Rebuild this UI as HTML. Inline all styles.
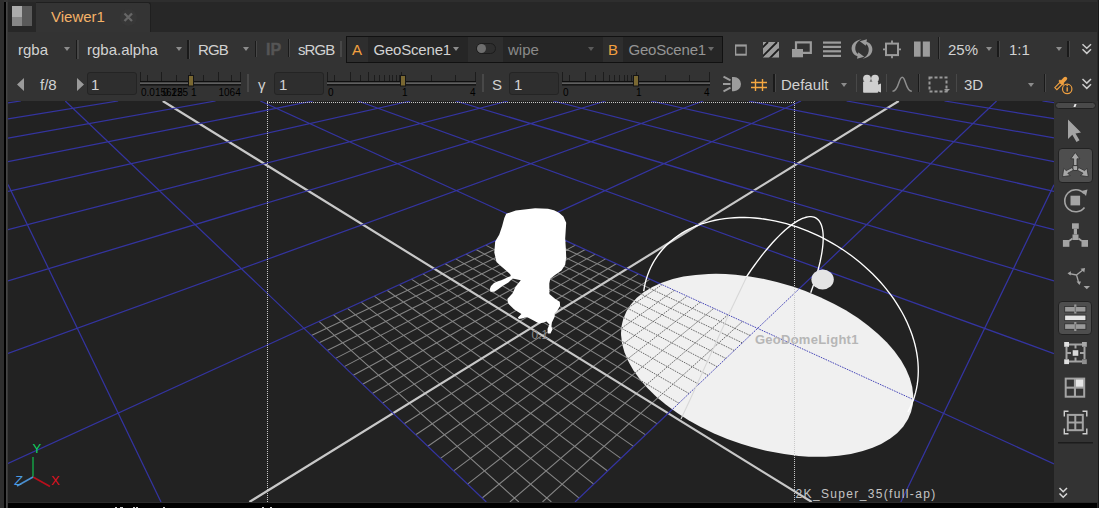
<!DOCTYPE html><html><head><meta charset="utf-8"><style>
html,body{margin:0;padding:0;width:1099px;height:508px;overflow:hidden;background:#333;position:relative}
.t{position:absolute;white-space:pre;line-height:1;font-family:"Liberation Sans",sans-serif}
</style></head><body>
<div style="position:absolute;left:0px;top:0px;width:4px;height:508px;background:#2e2e2e;"></div><div style="position:absolute;left:4px;top:2px;width:2px;height:506px;background:#000;"></div><div style="position:absolute;left:6px;top:2px;width:1px;height:506px;background:#474747;"></div><div style="position:absolute;left:7px;top:2px;width:1px;height:506px;background:#3a3a3a;"></div><div style="position:absolute;left:8px;top:0px;width:1091px;height:2px;background:#2e2e2e;"></div><div style="position:absolute;left:8px;top:2px;width:1091px;height:30px;background:#272727;"></div><div style="position:absolute;left:12px;top:6px;width:20px;height:20px;background:#444;"></div><div style="position:absolute;left:12px;top:6px;width:10px;height:11px;background:#acacac;"></div><div style="position:absolute;left:12px;top:17px;width:10px;height:9px;background:#878787;"></div><div style="position:absolute;left:22px;top:6px;width:10px;height:20px;background:#5a5a5a;"></div><div style="position:absolute;left:36px;top:2px;width:115px;height:30px;background:#343434;border-top:1px solid #1f1f1f;border-right:1px solid #1f1f1f;border-radius:0 3px 0 0;box-sizing:border-box"></div><div class="t" style="left:51px;top:9.30px;font-size:15px;color:#f4b268;">Viewer1</div><div style="position:absolute;left:120px;top:9px;width:17px;height:17px;border-radius:9px;background:#373737"></div><svg style="position:absolute;left:0;top:0" width="1099" height="40"><path d="M124.5 13.5L132 21M132 13.5L124.5 21" stroke="#666666" stroke-width="2.3"/></svg><div style="position:absolute;left:8px;top:32px;width:1089px;height:70px;background:#333333;"></div><div style="position:absolute;left:1097px;top:0px;width:1px;height:508px;background:#2a2a2a;"></div><div style="position:absolute;left:1098px;top:0px;width:1px;height:508px;background:#181818;"></div><div class="t" style="left:18px;top:42.30px;font-size:15px;color:#d2d2d2;">rgba</div><div style="position:absolute;left:64px;top:47px;width:0;height:0;border-left:3.5px solid transparent;border-right:3.5px solid transparent;border-top:4px solid #8c8c8c"></div><div style="position:absolute;left:187.2px;top:40px;width:1.5px;height:18.700000000000003px;background:#1a1a1a"></div><div style="position:absolute;left:188.7px;top:40px;width:1px;height:18.700000000000003px;background:#474747"></div><div style="position:absolute;left:76px;top:40px;width:1px;height:19px;background:#1a1a1a"></div><div style="position:absolute;left:77px;top:40px;width:2px;height:19px;background:#474747"></div><div class="t" style="left:87px;top:42.30px;font-size:15px;color:#d2d2d2;">rgba.alpha</div><div style="position:absolute;left:176px;top:47px;width:0;height:0;border-left:3.5px solid transparent;border-right:3.5px solid transparent;border-top:4px solid #8c8c8c"></div><div style="position:absolute;left:255px;top:41px;width:1px;height:16px;background:#1a1a1a"></div><div style="position:absolute;left:256px;top:41px;width:1px;height:16px;background:#474747"></div><div class="t" style="left:198px;top:42.30px;font-size:15px;color:#d2d2d2;letter-spacing:-0.9px">RGB</div><div style="position:absolute;left:243px;top:47px;width:0;height:0;border-left:3.5px solid transparent;border-right:3.5px solid transparent;border-top:4px solid #8c8c8c"></div><div style="position:absolute;left:288px;top:39px;width:1px;height:18px;background:#1a1a1a"></div><div style="position:absolute;left:289px;top:39px;width:1px;height:18px;background:#474747"></div><div class="t" style="left:266px;top:41.96px;font-size:16px;color:#555555;font-weight:bold;-webkit-text-stroke:0.4px #555">IP</div><div class="t" style="left:298px;top:42.30px;font-size:15px;color:#d2d2d2;letter-spacing:-0.9px">sRGB</div><div style="position:absolute;left:340.2px;top:41px;width:2px;height:16px;background:#484848"></div><div style="position:absolute;left:346px;top:36px;width:377px;height:27px;background:#111;"></div><div style="position:absolute;left:347px;top:37px;width:21px;height:25px;background:#2e2e2e;"></div><div style="position:absolute;left:368px;top:37px;width:100px;height:25px;background:#262626;"></div><div style="position:absolute;left:468px;top:37px;width:35px;height:25px;background:#2e2e2e;"></div><div style="position:absolute;left:503px;top:37px;width:100px;height:25px;background:#262626;"></div><div style="position:absolute;left:603px;top:37px;width:20px;height:25px;background:#2e2e2e;"></div><div style="position:absolute;left:623px;top:37px;width:99px;height:25px;background:#262626;"></div><div class="t" style="left:352px;top:42.30px;font-size:15px;color:#f2a040;">A</div><div class="t" style="left:373.5px;top:42.30px;font-size:15px;color:#d2d2d2;letter-spacing:-0.2px">GeoScene1</div><div style="position:absolute;left:453px;top:47px;width:0;height:0;border-left:3.5px solid transparent;border-right:3.5px solid transparent;border-top:4px solid #8c8c8c"></div><div style="position:absolute;left:476px;top:43px;width:20px;height:10.6px;border-radius:6px;background:#2e2e2e;border:1px solid #1c1c1c;box-sizing:border-box"></div><div style="position:absolute;left:477px;top:43.8px;width:9px;height:9px;border-radius:5px;background:#6e6e6e"></div><div class="t" style="left:508px;top:42.30px;font-size:15px;color:#8a8a8a;">wipe</div><div style="position:absolute;left:588px;top:47px;width:0;height:0;border-left:3.5px solid transparent;border-right:3.5px solid transparent;border-top:4px solid #5a5a5a"></div><div class="t" style="left:608px;top:42.30px;font-size:15px;color:#f2a040;">B</div><div class="t" style="left:628.5px;top:42.30px;font-size:15px;color:#959595;letter-spacing:-0.2px">GeoScene1</div><div style="position:absolute;left:708px;top:47px;width:0;height:0;border-left:3.5px solid transparent;border-right:3.5px solid transparent;border-top:4px solid #6a6a6a"></div><svg style="position:absolute;left:0;top:32px" width="1099" height="36" viewBox="0 32 1099 36">
<rect x="735" y="44.4" width="11.8" height="11.3" fill="#9c9c9c"/><rect x="736.3" y="46.6" width="9.2" height="7.1" fill="#333"/>
<clipPath id="hc"><rect x="763" y="42" width="16" height="15.7"/></clipPath><g clip-path="url(#hc)"><rect x="763" y="42" width="16" height="15.7" fill="#9c9c9c"/><path d="M760 50L768 42M760 59L777 42M769 59L779 49" stroke="#1e1e1e" stroke-width="1.9"/></g>
<rect x="792" y="49" width="11" height="8.3" fill="#9c9c9c"/><path d="M796 49V42.3H810.8V52.8H803" fill="none" stroke="#9c9c9c" stroke-width="2.2"/>
<g fill="#9c9c9c"><rect x="823" y="41.5" width="18" height="2.2"/><rect x="823" y="45.8" width="18" height="2.2"/><rect x="823" y="50.2" width="18" height="2.2"/><rect x="823" y="54.8" width="18" height="2.2"/></g>
<g fill="#9c9c9c"><path id="rf" d="M861.5 39.3C853.5 40.5 850.5 46 852 51C853 54 855 55.5 857.5 56.3L857 58.8L864.2 56.7L858.2 52.3L858 54C855.8 52.5 855 50 855.3 47C855.7 43.5 858 41 861.5 39.3Z"/><path transform="rotate(180 862 49)" d="M861.5 39.3C853.5 40.5 850.5 46 852 51C853 54 855 55.5 857.5 56.3L857 58.8L864.2 56.7L858.2 52.3L858 54C855.8 52.5 855 50 855.3 47C855.7 43.5 858 41 861.5 39.3Z"/></g>
<rect x="886" y="43.6" width="12" height="11.5" fill="none" stroke="#9c9c9c" stroke-width="2"/>
<path d="M892 40.5V43.6M892 55V58.3M883 49.4H886M898 49.4H901" stroke="#9c9c9c" stroke-width="1.8"/>
<rect x="914" y="41.5" width="6.6" height="15.2" fill="#9c9c9c"/><rect x="922.8" y="41.5" width="7.1" height="15.2" fill="#9c9c9c"/>
</svg><div style="position:absolute;left:938px;top:37px;width:1px;height:22px;background:#1a1a1a"></div><div style="position:absolute;left:939px;top:37px;width:1px;height:22px;background:#474747"></div><div class="t" style="left:948px;top:42.30px;font-size:15px;color:#d2d2d2;">25%</div><div style="position:absolute;left:986px;top:47px;width:0;height:0;border-left:3.5px solid transparent;border-right:3.5px solid transparent;border-top:4px solid #8c8c8c"></div><div style="position:absolute;left:997.2px;top:41px;width:1.5px;height:16px;background:#1a1a1a"></div><div style="position:absolute;left:998.7px;top:41px;width:1px;height:16px;background:#474747"></div><div class="t" style="left:1009px;top:42.30px;font-size:15px;color:#d2d2d2;">1:1</div><div style="position:absolute;left:1056px;top:47px;width:0;height:0;border-left:3.5px solid transparent;border-right:3.5px solid transparent;border-top:4px solid #8c8c8c"></div><div style="position:absolute;left:1067.1px;top:41px;width:1.5px;height:16px;background:#1a1a1a"></div><div style="position:absolute;left:1068.6px;top:41px;width:1px;height:16px;background:#474747"></div><svg style="position:absolute;left:0;top:0" width="1099" height="60"><path d="M1082.5 44.2L1086.8 48.3L1091 44.2M1082.5 49.3L1086.8 53.4L1091 49.3" fill="none" stroke="#cccccc" stroke-width="1.5"/></svg><svg style="position:absolute;left:0;top:66px" width="1099" height="36"><path d="M24 12L17 18.5L24 25Z M77 12L84 18.5L77 25Z" fill="#9a9a9a"/></svg><div class="t" style="left:40px;top:77.30px;font-size:15px;color:#d2d2d2;">f/8</div><div style="position:absolute;left:87px;top:72px;width:50px;height:23px;background:#2e2e2e;border:1px solid #242424;border-radius:3px;box-sizing:border-box"></div><div class="t" style="left:91px;top:77.30px;font-size:15px;color:#d2d2d2;">1</div><svg style="position:absolute;left:0;top:66px" width="1099" height="36" viewBox="0 66 1099 36"><rect x="140" y="81" width="101" height="4.5" fill="#0e0e0e"/><rect x="140" y="82.3" width="101" height="1.8" fill="#606060"/><rect x="140" y="72" width="1" height="9" fill="#1c1c1c"/><rect x="147" y="75" width="1" height="6" fill="#1c1c1c"/><rect x="161" y="72" width="1" height="9" fill="#1c1c1c"/><rect x="176" y="75" width="1" height="6" fill="#1c1c1c"/><rect x="190" y="72" width="1" height="9" fill="#1c1c1c"/><rect x="203" y="75" width="1" height="6" fill="#1c1c1c"/><rect x="218" y="72" width="1" height="9" fill="#1c1c1c"/><rect x="231" y="75" width="1" height="6" fill="#1c1c1c"/><rect x="240" y="72" width="1" height="9" fill="#1c1c1c"/><rect x="188" y="75" width="6" height="11.5" fill="#151515"/><rect x="189" y="76" width="4" height="9.5" fill="#7a6832"/></svg><div class="t" style="left:141px;top:87.73px;font-size:10px;color:#000;">0.015625</div><div class="t" style="left:163px;top:87.73px;font-size:10px;color:#000;">0.125</div><div class="t" style="left:191px;top:87.73px;font-size:10px;color:#000;">1</div><div class="t" style="left:218.5px;top:87.73px;font-size:10px;color:#000;">1064</div><div style="position:absolute;left:247px;top:74px;width:2px;height:18px;background:#484848"></div><div class="t" style="left:258px;top:77.30px;font-size:15px;color:#d2d2d2;">γ</div><div style="position:absolute;left:274px;top:72px;width:50px;height:23px;background:#2e2e2e;border:1px solid #242424;border-radius:3px;box-sizing:border-box"></div><div class="t" style="left:279px;top:77.30px;font-size:15px;color:#d2d2d2;">1</div><svg style="position:absolute;left:0;top:66px" width="1099" height="36" viewBox="0 66 1099 36"><rect x="327" y="81" width="149" height="4.5" fill="#0e0e0e"/><rect x="327" y="82.3" width="149" height="1.8" fill="#606060"/><rect x="327" y="72" width="1" height="9" fill="#1c1c1c"/><rect x="334" y="75" width="1" height="6" fill="#1c1c1c"/><rect x="350" y="72" width="1" height="9" fill="#1c1c1c"/><rect x="360" y="75" width="1" height="6" fill="#1c1c1c"/><rect x="368" y="72" width="1" height="9" fill="#1c1c1c"/><rect x="374" y="75" width="1" height="6" fill="#1c1c1c"/><rect x="379" y="75" width="1" height="6" fill="#1c1c1c"/><rect x="384" y="75" width="1" height="6" fill="#1c1c1c"/><rect x="389" y="75" width="1" height="6" fill="#1c1c1c"/><rect x="392" y="75" width="1" height="6" fill="#1c1c1c"/><rect x="396" y="75" width="1" height="6" fill="#1c1c1c"/><rect x="399" y="75" width="1" height="6" fill="#1c1c1c"/><rect x="401" y="72" width="1" height="9" fill="#1c1c1c"/><rect x="431" y="75" width="1" height="6" fill="#1c1c1c"/><rect x="455" y="75" width="1" height="6" fill="#1c1c1c"/><rect x="475" y="72" width="1" height="9" fill="#1c1c1c"/><rect x="400" y="75" width="6" height="11.5" fill="#151515"/><rect x="401" y="76" width="4" height="9.5" fill="#7a6832"/></svg><div class="t" style="left:328px;top:87.73px;font-size:10px;color:#000;">0</div><div class="t" style="left:402px;top:87.73px;font-size:10px;color:#000;">1</div><div class="t" style="left:470px;top:87.73px;font-size:10px;color:#000;">4</div><div style="position:absolute;left:482px;top:74px;width:2px;height:18px;background:#484848"></div><div class="t" style="left:492px;top:77.30px;font-size:15px;color:#d2d2d2;">S</div><div style="position:absolute;left:509px;top:72px;width:50px;height:23px;background:#2e2e2e;border:1px solid #242424;border-radius:3px;box-sizing:border-box"></div><div class="t" style="left:514px;top:77.30px;font-size:15px;color:#d2d2d2;">1</div><svg style="position:absolute;left:0;top:66px" width="1099" height="36" viewBox="0 66 1099 36"><rect x="562" y="81" width="148" height="4.5" fill="#0e0e0e"/><rect x="562" y="82.3" width="148" height="1.8" fill="#606060"/><rect x="562" y="72" width="1" height="9" fill="#1c1c1c"/><rect x="569" y="75" width="1" height="6" fill="#1c1c1c"/><rect x="585" y="72" width="1" height="9" fill="#1c1c1c"/><rect x="595" y="75" width="1" height="6" fill="#1c1c1c"/><rect x="603" y="72" width="1" height="9" fill="#1c1c1c"/><rect x="609" y="75" width="1" height="6" fill="#1c1c1c"/><rect x="614" y="75" width="1" height="6" fill="#1c1c1c"/><rect x="619" y="75" width="1" height="6" fill="#1c1c1c"/><rect x="624" y="75" width="1" height="6" fill="#1c1c1c"/><rect x="627" y="75" width="1" height="6" fill="#1c1c1c"/><rect x="631" y="75" width="1" height="6" fill="#1c1c1c"/><rect x="634" y="75" width="1" height="6" fill="#1c1c1c"/><rect x="636" y="72" width="1" height="9" fill="#1c1c1c"/><rect x="665" y="75" width="1" height="6" fill="#1c1c1c"/><rect x="689" y="75" width="1" height="6" fill="#1c1c1c"/><rect x="709" y="72" width="1" height="9" fill="#1c1c1c"/><rect x="633" y="75" width="6" height="11.5" fill="#151515"/><rect x="634" y="76" width="4" height="9.5" fill="#7a6832"/></svg><div class="t" style="left:563px;top:87.73px;font-size:10px;color:#000;">0</div><div class="t" style="left:636px;top:87.73px;font-size:10px;color:#000;">1</div><div class="t" style="left:704px;top:87.73px;font-size:10px;color:#000;">4</div><svg style="position:absolute;left:0;top:66px" width="1099" height="36" viewBox="0 66 1099 36">
<path d="M732 77H734A7 7.1 0 0 1 734 91.2H732Z" fill="#9c9c9c"/>
<path d="M723.5 76.7L730.5 80.3M723 84H730.5M723.5 91.3L730.5 87.7" stroke="#9c9c9c" stroke-width="2"/>
<path d="M755.5 79V91M762.5 79V91M751 82.5H767M751 87.5H767" stroke="#f5a842" stroke-width="1.4"/>
</svg><div style="position:absolute;left:773px;top:74px;width:1.5px;height:18px;background:#1a1a1a"></div><div style="position:absolute;left:774.5px;top:74px;width:1px;height:18px;background:#474747"></div><div class="t" style="left:781px;top:77.30px;font-size:15px;color:#d2d2d2;">Default</div><div style="position:absolute;left:841px;top:83px;width:0;height:0;border-left:3.5px solid transparent;border-right:3.5px solid transparent;border-top:4px solid #8c8c8c"></div><div style="position:absolute;left:856px;top:74px;width:1px;height:18px;background:#484848"></div><svg style="position:absolute;left:0;top:66px" width="1099" height="36" viewBox="0 66 1099 36">
<circle cx="867" cy="78.6" r="3.9" fill="#cfcfcf"/><circle cx="875" cy="78.6" r="3.9" fill="#cfcfcf"/>
<rect x="863.1" y="81.5" width="15" height="11.2" rx="0.8" fill="#cfcfcf"/><path d="M877 85L881 83.5V92.5L877 91Z" fill="#cfcfcf"/>
<path d="M892.5 91.3C899 91.3 898.5 77.3 902.2 77.3C906 77.3 905.5 91.3 911.8 91.3" fill="none" stroke="#8e8e8e" stroke-width="1.5"/>
<rect x="929.5" y="77.5" width="17" height="14" fill="none" stroke="#9a9a9a" stroke-width="2" stroke-dasharray="3 2"/>
<path d="M944 89H950L947 92Z" fill="#9a9a9a"/>
</svg><div style="position:absolute;left:886px;top:74px;width:1px;height:18px;background:#484848"></div><div style="position:absolute;left:917.8px;top:74px;width:1.5px;height:18px;background:#1a1a1a"></div><div style="position:absolute;left:919.3px;top:74px;width:1px;height:18px;background:#474747"></div><div style="position:absolute;left:956px;top:74px;width:1px;height:18px;background:#484848"></div><div class="t" style="left:964px;top:77.30px;font-size:15px;color:#d2d2d2;">3D</div><div style="position:absolute;left:1028px;top:83px;width:0;height:0;border-left:3.5px solid transparent;border-right:3.5px solid transparent;border-top:4px solid #8c8c8c"></div><div style="position:absolute;left:1043.6px;top:74px;width:1.5px;height:18px;background:#1a1a1a"></div><div style="position:absolute;left:1045.1px;top:74px;width:1px;height:18px;background:#474747"></div><svg style="position:absolute;left:0;top:66px" width="1099" height="36" viewBox="0 66 1099 36">
<path d="M1054.8 87.6L1060.3 82.1L1062.4 84.2L1056.9 89.7Z" fill="none" stroke="#f0a040" stroke-width="1.1"/>
<path d="M1059.2 80.3L1063.6 84.7" stroke="#f0a040" stroke-width="2.2"/><path d="M1061.7 82.3L1065.3 78.7" stroke="#f0a040" stroke-width="3.8" stroke-linecap="round"/>
<circle cx="1067.2" cy="88.9" r="4.7" fill="#333" stroke="#f0a040" stroke-width="1.2"/><path d="M1067.2 87.2V91.6" stroke="#f0a040" stroke-width="1.4"/><rect x="1066.5" y="85" width="1.4" height="1.2" fill="#f0a040"/>
<path d="M1082.5 79L1086.8 83.1L1091 79M1082.5 84.3L1086.8 88.4L1091 84.3" fill="none" stroke="#cccccc" stroke-width="1.5"/>
</svg><div style="position:absolute;left:8px;top:101px;width:1046px;height:401px;background:#222222;"></div><svg style="position:absolute;left:0;top:0" width="1099" height="508" viewBox="0 0 1099 508">
<defs><clipPath id="vc"><rect x="8" y="101" width="1046" height="401"/></clipPath></defs>
<g clip-path="url(#vc)">
<clipPath id="ec"><ellipse cx="767.17" cy="365.27" rx="151.25" ry="82.79" transform="rotate(17.96 767.17 365.27)"/></clipPath>
<path d="M542.45 502L742.5 321.46M518.85 502L318.94 321.39M509.88 502L727.94 314.8M551.39 502L333.48 314.74M482.15 498.03L713.87 308.37M579.15 498.08L347.54 308.31M467.57 484.15L700.26 302.15M593.74 484.2L361.13 302.1M453.68 470.92L687.09 296.13M607.63 470.98L374.29 296.09M440.43 458.31L674.34 290.3M620.88 458.37L387.03 290.26M427.8 446.27L661.99 284.65M633.53 446.34L399.37 284.62M415.72 434.77L650.02 279.18M645.61 434.85L411.33 279.15M404.17 423.77L638.41 273.87M657.18 423.85L422.93 273.85M382.51 403.14L616.22 263.73M678.85 403.23L445.11 263.71M372.35 393.46L605.61 258.87M689.02 393.55L455.72 258.86M362.59 384.17L595.31 254.16M698.79 384.26L466.02 254.15M353.22 375.24L585.29 249.58M708.18 375.33L476.03 249.57M344.21 366.66L575.55 245.13M717.2 366.75L485.77 245.12M335.53 358.4L566.08 240.8M725.88 358.49L495.24 240.79M327.18 350.45L556.86 236.58M734.24 350.54L504.45 236.58M319.14 342.79L547.9 232.48M742.3 342.87L513.42 232.48M311.38 335.4L539.16 228.49M750.07 335.48L522.15 228.49" stroke="#848484" stroke-width="1.05" fill="none"/>
<path d="M249.35 502L898.78 101M811.77 502L162.76 101" stroke="#c8c8c8" stroke-width="2.2" fill="none"/>
<path d="M900.84 502L1054 184.69M161.01 502L8 184.44M575.02 502L996.57 101M486.31 502L65.26 101M8 463.53L801.04 101M1054 463.88L260.32 101M8 353.37L703.35 101M1054 353.56L357.92 101M8 280.88L605.7 101M1054 280.96L455.56 101M8 229.56L508.1 101M1054 229.57L553.25 101M8 191.32L410.55 101M1054 191.27L650.99 101M8 161.72L313.04 101M1054 161.63L748.77 101M8 138.13L215.57 101M1054 138L846.6 101M8 118.89L118.15 101M1054 118.74L944.47 101M8 102.9L20.78 101M1054 102.72L1042.39 101" stroke="#3434a0" stroke-width="1.25" fill="none"/>
<ellipse cx="767.17" cy="365.27" rx="151.25" ry="82.79" transform="rotate(17.96 767.17 365.27)" fill="#f0f0f0"/>
<g clip-path="url(#ec)"><path d="M542.45 502L742.5 321.46M518.85 502L318.94 321.39M509.88 502L727.94 314.8M551.39 502L333.48 314.74M482.15 498.03L713.87 308.37M579.15 498.08L347.54 308.31M467.57 484.15L700.26 302.15M593.74 484.2L361.13 302.1M453.68 470.92L687.09 296.13M607.63 470.98L374.29 296.09M440.43 458.31L674.34 290.3M620.88 458.37L387.03 290.26M427.8 446.27L661.99 284.65M633.53 446.34L399.37 284.62M415.72 434.77L650.02 279.18M645.61 434.85L411.33 279.15M404.17 423.77L638.41 273.87M657.18 423.85L422.93 273.85M382.51 403.14L616.22 263.73M678.85 403.23L445.11 263.71M372.35 393.46L605.61 258.87M689.02 393.55L455.72 258.86M362.59 384.17L595.31 254.16M698.79 384.26L466.02 254.15M353.22 375.24L585.29 249.58M708.18 375.33L476.03 249.57M344.21 366.66L575.55 245.13M717.2 366.75L485.77 245.12M335.53 358.4L566.08 240.8M725.88 358.49L495.24 240.79M327.18 350.45L556.86 236.58M734.24 350.54L504.45 236.58M319.14 342.79L547.9 232.48M742.3 342.87L513.42 232.48M311.38 335.4L539.16 228.49M750.07 335.48L522.15 228.49" stroke="#6a6a6a" stroke-width="1" stroke-dasharray="1.6 1" fill="none"/>
<path d="M900.84 502L1054 184.69M161.01 502L8 184.44M575.02 502L996.57 101M486.31 502L65.26 101M8 463.53L801.04 101M1054 463.88L260.32 101M8 353.37L703.35 101M1054 353.56L357.92 101M8 280.88L605.7 101M1054 280.96L455.56 101M8 229.56L508.1 101M1054 229.57L553.25 101M8 191.32L410.55 101M1054 191.27L650.99 101M8 161.72L313.04 101M1054 161.63L748.77 101M8 138.13L215.57 101M1054 138L846.6 101M8 118.89L118.15 101M1054 118.74L944.47 101M8 102.9L20.78 101M1054 102.72L1042.39 101" stroke="#4848b8" stroke-width="1" stroke-dasharray="1.6 1" fill="none"/></g>
<path d="M506.2 213.8L515.8 210.5L535.1 208.3L548 208.8L554 210.3L559 212.8L563.4 216.5L566.2 222.8L565.8 229.3L565.2 238.6L565.8 248L566.2 257.3L565.2 264.8L561.5 270.4L555 275.1L550.3 278.8L549.3 283.5L549.4 293.9L555.3 298.9L559.8 301.8L560.1 305.7L557.3 310.7L554.4 313.6L554.8 316.6L551.9 322.5L551.4 326.4L552.4 329.4L550.5 333.5L547.8 333.5L547.5 329L549.4 324.4L546.5 321.5L543.5 322.5L539.1 323.5L531.7 319.5L526.8 317.1L521.9 318.5L518.9 319L517.9 317.6L521.4 314.1L517 311.2L514 309.2L508.4 303.8L507.3 299.1L512.6 293.2L515.5 286.7L520.8 280.2L512.6 278.5L508.4 282.5L502.5 286.1L497.8 289.5L494.3 291.8L490.5 291.8L489.8 289L491 286L494 283L498 281.2L501.3 280.2L510.8 276L510.2 274.3L504.9 269.5L500.8 266L496.5 262L494.3 252.4L495.2 241.4L499.3 234.5L502.1 226.2L504.3 217.9Z" fill="#fff"/>
<path d="M643.70 291.02L644.41 286.81L645.32 282.68L646.43 278.62L647.74 274.66L649.25 270.78L650.94 267.01L652.83 263.34L654.91 259.77L657.17 256.32L659.62 252.99L662.24 249.79L665.04 246.71L668.00 243.77L671.13 240.97L674.43 238.30L677.88 235.79L681.48 233.42L685.23 231.21L689.12 229.15L693.14 227.25L697.29 225.52L701.57 223.94L705.96 222.54L710.46 221.31L715.06 220.24L719.76 219.35L724.56 218.64L729.43 218.09L734.38 217.73L739.39 217.54L744.47 217.52L749.60 217.69L754.78 218.03L759.99 218.54L765.23 219.23L770.50 220.10L775.78 221.13L781.07 222.34L786.36 223.72L791.64 225.27L796.90 226.98L802.14 228.85L807.34 230.88L812.51 233.07L817.63 235.42L822.70 237.91L827.70 240.55L832.63 243.34L837.49 246.26L842.26 249.31L846.95 252.50L851.53 255.81L856.01 259.24L860.38 262.79L864.63 266.44L868.75 270.21L872.75 274.06L876.61 278.02L880.33 282.06L883.90 286.18L887.32 290.38L890.58 294.64L893.68 298.97L896.61 303.36L899.38 307.79L901.96 312.27L904.37 316.79L906.60 321.33L908.63 325.90L910.49 330.49L912.14 335.09L913.61 339.69L914.88 344.28L915.95 348.87L916.82 353.44L917.49 357.98L917.96 362.50L918.22 366.98L918.29 371.41L918.14 375.80L917.80 380.12L917.26 384.39L916.51 388.58L915.56 392.70L914.41 396.74L913.07 400.69L911.53 404.54L909.80 408.30L907.87 411.95" fill="none" stroke="#fff" stroke-width="1.35"/>
<path d="M746.26 277.14L748.87 273.25L751.50 269.45L754.13 265.74L756.78 262.12L759.42 258.61L762.06 255.20L764.69 251.92L767.31 248.75L769.91 245.70L772.49 242.79L775.05 240.00L777.58 237.36L780.08 234.86L782.54 232.51L784.96 230.31L787.34 228.26L789.66 226.37L791.94 224.64L794.16 223.07L796.32 221.67L798.42 220.44L800.45 219.38L802.41 218.49L804.30 217.77L806.12 217.23L807.85 216.86L809.51 216.67L811.08 216.65L812.56 216.81L813.96 217.15L815.26 217.66L816.47 218.34L817.59 219.20L818.61 220.24L819.53 221.44L820.35 222.81L821.07 224.35L821.69 226.05L822.20 227.91L822.61 229.93L822.92 232.10L823.12 234.43L823.21 236.90L823.20 239.52L823.08 242.28L822.85 245.17L822.52 248.19L822.09 251.34L821.55 254.61L820.91 257.99L820.17 261.48L819.32 265.08L818.38 268.77L817.34 272.56L816.20 276.44L814.96 280.39L813.64 284.42L812.22 288.51L810.71 292.67" fill="none" stroke="#fff" stroke-width="1.35"/>
<path d="M746.6 276.9L728.5 315L689.9 400L681 419" fill="none" stroke="#d8d8d8" stroke-width="1.1"/>
<ellipse cx="822.6" cy="279.5" rx="11.2" ry="9.9" fill="#e4e4e4"/>
<path d="M267.5 101V502M794.5 101V502M267 102.5H795" stroke="#c8c8c8" stroke-width="1" stroke-dasharray="1 1" fill="none"/>
</g>
<path d="M33 457V477" stroke="#169040" stroke-width="1.7"/><path d="M33 477L50 486.5" stroke="#b80f1c" stroke-width="1.7"/><path d="M33 477L17 486" stroke="#4a8fd0" stroke-width="1.7"/>
</svg><div class="t" style="left:755px;top:332.70px;font-size:13px;color:#b6b6b6;font-weight:bold;letter-spacing:0.25px">GeoDomeLight1</div><div class="t" style="left:531.5px;top:329.14px;font-size:12px;color:#8a8a8a;font-family:"Liberation Serif",serif;letter-spacing:0.9px;-webkit-text-stroke:0.35px #8a8a8a">0.1</div><div class="t" style="left:32.5px;top:442.00px;font-size:13px;color:#10d060;">Y</div><div class="t" style="left:51px;top:474.30px;font-size:13px;color:#e01020;">X</div><div class="t" style="left:14.5px;top:474.72px;font-size:12.5px;color:#4a9ae0;font-style:italic">Z</div><div class="t" style="left:795.5px;top:488.14px;font-size:12px;color:#c4c4c4;letter-spacing:1.35px">2K_Super_35(full-ap)</div><div style="position:absolute;left:1054px;top:101px;width:44px;height:401px;background:#333333;"></div><div style="position:absolute;left:1055px;top:102px;width:41px;height:7px;background:#4a4a4a;border:1px solid #222;border-radius:4px;box-sizing:border-box"></div><div style="position:absolute;left:1074px;top:104px;width:2px;height:3px;background:#e8e8e8;transform:skewX(-20deg)"></div><div style="position:absolute;left:1058px;top:148px;width:35px;height:35px;background:#4e4e4e;border:1.5px solid #222;border-radius:4px;box-sizing:border-box"></div><div style="position:absolute;left:1058px;top:301px;width:34px;height:34px;background:#4e4e4e;border:1.5px solid #222;border-radius:4px;box-sizing:border-box"></div><svg style="position:absolute;left:1054px;top:101px" width="44" height="401" viewBox="1054 101 44 401">
<path d="M1068 119.5V139L1072.3 134.8L1076.5 142L1079.5 140.3L1075.5 133.5L1081 132.5Z" fill="#a4a4a4"/>
<g fill="#a8a8a8" stroke="#2e2e2e" stroke-width="0.8"><path d="M1075.3 152.5L1079.8 158.8H1077V165.7H1073.6V158.8H1070.8Z"/><rect x="1072.9" y="165.7" width="4.8" height="4.7"/>
<path d="M1062.5 176.7L1063.8 168.3L1066.2 170.6L1072.2 167.5L1073.4 170.2L1067.8 173.2L1070.2 175.6Z"/><path d="M1088.3 176.7L1087 168.3L1084.6 170.6L1078.6 167.5L1077.4 170.2L1083 173.2L1080.6 175.6Z"/></g>
<path d="M1084 193.5A11 11 0 1 0 1084.5 207.5" fill="none" stroke="#a4a4a4" stroke-width="1.6"/><path d="M1081.5 191L1087.5 189.5L1086 196Z" fill="#a4a4a4"/><rect x="1070.5" y="195.7" width="9.6" height="9.7" fill="#a4a4a4"/>
<rect x="1072" y="223.3" width="6.8" height="5.5" fill="#a4a4a4"/><rect x="1073.8" y="228.8" width="3.2" height="5.7" fill="#a4a4a4"/><rect x="1072.5" y="234.5" width="6" height="5.5" fill="#a4a4a4"/>
<rect x="1062.9" y="240" width="6.5" height="6.8" fill="#a4a4a4"/><rect x="1081.5" y="240" width="6.5" height="6.8" fill="#a4a4a4"/><path d="M1069 241L1072.5 238.5M1081.8 241L1078.5 238.5" stroke="#a4a4a4" stroke-width="1.6"/>
<g stroke="#a4a4a4" stroke-width="1.3" fill="none"><path d="M1076.5 275L1083.5 269.5M1076.5 275L1069.5 273.6M1076.5 275L1078.8 283"/></g>
<g fill="#a4a4a4"><path d="M1085 268L1080.5 268.8L1084.3 272.5Z"/><path d="M1067.5 273.2L1071 271.2L1070.6 275.6Z"/><path d="M1079.5 285L1076.5 281.5L1081 281.5Z"/><path d="M1083.6 286H1090L1086.8 289.2Z"/></g>
<g stroke="#2a2a2a" stroke-width="0.8"><rect x="1064.7" y="306.5" width="21.2" height="5.5" fill="#9a9a9a"/><rect x="1064.7" y="315.1" width="21.2" height="5.5" fill="#e4e4e4"/><rect x="1064.7" y="323.8" width="21.2" height="5.5" fill="#9a9a9a"/></g>
<path d="M1075.3 304.5V313.5M1075.3 322V331" stroke="#9a9a9a" stroke-width="2.2"/><path d="M1075.3 306.5V312M1075.3 323.8V329.3" stroke="#6a6a6a" stroke-width="1"/>
<g fill="#a4a4a4"><rect x="1069" y="343.5" width="13" height="2"/><rect x="1074.5" y="345" width="2" height="3.5"/><rect x="1069" y="360.5" width="13" height="2"/><rect x="1074.5" y="357.5" width="2" height="3.5"/>
<rect x="1065.5" y="347" width="2" height="12"/><rect x="1067" y="352" width="4" height="2"/><rect x="1083.5" y="347" width="2" height="12"/><rect x="1080" y="352" width="4" height="2"/></g>
<g><rect x="1064.2" y="342" width="4.8" height="4.8" fill="#e0e0e0"/><rect x="1082" y="342" width="4.8" height="4.8" fill="#a8a8a8"/><rect x="1064.2" y="359.3" width="4.8" height="4.8" fill="#e0e0e0"/><rect x="1082" y="359.3" width="4.8" height="4.8" fill="#909090"/><rect x="1072.7" y="350.2" width="5.6" height="5.6" fill="#d8d8d8"/></g>
<rect x="1064.7" y="377.6" width="20.5" height="20.1" fill="#a4a4a4"/><rect x="1066.7" y="379.6" width="7.2" height="7" fill="#333"/><rect x="1076" y="379.6" width="7.2" height="7" fill="#e6e6e6"/><rect x="1066.7" y="388.7" width="7.2" height="7" fill="#333"/><rect x="1076" y="388.7" width="7.2" height="7" fill="#333"/>
<rect x="1067.8" y="414.9" width="15" height="15.3" fill="none" stroke="#a4a4a4" stroke-width="2"/><path d="M1075.3 414.9V430.2M1067.8 422.5H1082.8" stroke="#a4a4a4" stroke-width="2"/>
<path d="M1064.3 416.5V411.3H1068.5M1082.5 411.3H1086.8V416.5M1064.3 428.5V433.8H1068.5M1082.5 433.8H1086.8V428.5" fill="none" stroke="#d0d0d0" stroke-width="1.4"/>
<rect x="1058" y="442" width="35" height="1.5" fill="#1c1c1c"/>
<path d="M1059.5 488L1063.2 491.7L1067 488M1059.5 493.5L1063.2 497.2L1067 493.5" fill="none" stroke="#d8d8d8" stroke-width="1.5"/>
</svg><div style="position:absolute;left:8px;top:502px;width:1089px;height:1px;background:#2c2c2c;"></div><div style="position:absolute;left:8px;top:503px;width:1089px;height:5px;background:#000;"></div><div style="position:absolute;left:115px;top:507px;width:2px;height:1px;background:#d0d0d0;"></div><div style="position:absolute;left:120px;top:507px;width:3px;height:1px;background:#d0d0d0;"></div><div style="position:absolute;left:133px;top:507px;width:2px;height:1px;background:#d0d0d0;"></div><div style="position:absolute;left:136px;top:507px;width:2px;height:1px;background:#d0d0d0;"></div><div style="position:absolute;left:163px;top:507px;width:2px;height:1px;background:#d0d0d0;"></div><div style="position:absolute;left:262px;top:507px;width:2px;height:1px;background:#d0d0d0;"></div><div style="position:absolute;left:270px;top:507px;width:2px;height:1px;background:#d0d0d0;"></div>
</body></html>
